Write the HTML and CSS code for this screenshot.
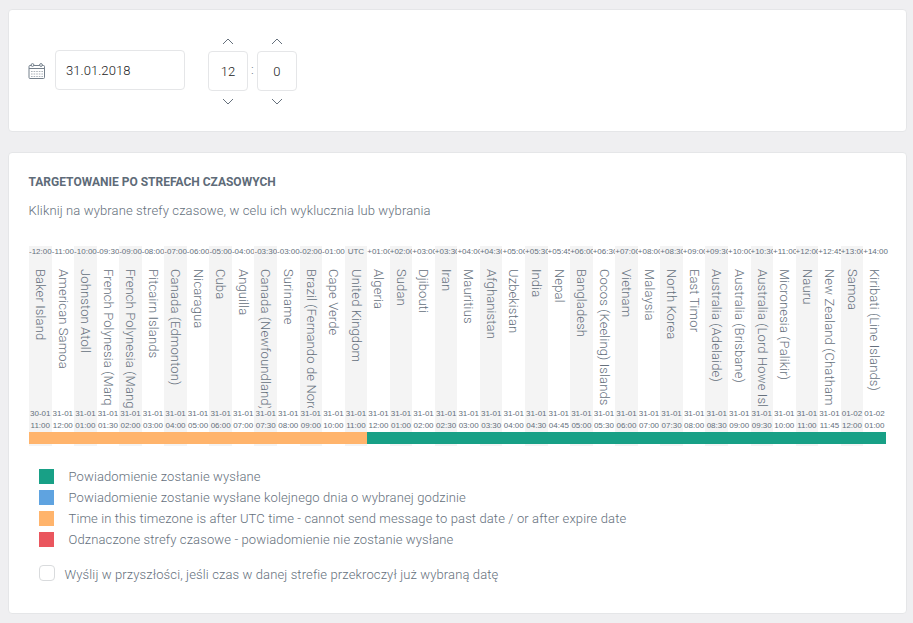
FILE: index.html
```html
<!DOCTYPE html>
<html lang="pl">
<head>
<meta charset="utf-8">
<title>Strefy czasowe</title>
<link rel="stylesheet" href="styles.css">
</head>
<body>
<section class="card schedule">
  <svg class="calendar" width="18" height="18" viewBox="0 0 18 18" fill="none" stroke="#75808c">
    <rect x="1" y="3.5" width="15.5" height="13" rx="1"/>
    <path d="M1 6.5h15.5"/>
    <circle cx="4.5" cy="3" r="1.4" fill="#fff"/>
    <circle cx="13" cy="3" r="1.4" fill="#fff"/>
    <path d="M3 9.5h12M3 12h12M3 14.5h12" stroke-dasharray="1.6 1" stroke-width="1.2" opacity=".6"/>
  </svg>
  <input class="date" type="text" value="31.01.2018">
  <div class="spinner">
    <svg width="12" height="7" viewBox="0 0 12 7"><path d="M1 6l5-5 5 5"/></svg>
    <input type="text" value="12">
    <svg width="12" height="7" viewBox="0 0 12 7"><path d="M1 1l5 5 5-5"/></svg>
  </div>
  <span class="colon">:</span>
  <div class="spinner">
    <svg width="12" height="7" viewBox="0 0 12 7"><path d="M1 6l5-5 5 5"/></svg>
    <input type="text" value="0">
    <svg width="12" height="7" viewBox="0 0 12 7"><path d="M1 1l5 5 5-5"/></svg>
  </div>
</section>
<section class="card targeting">
  <h2>TARGETOWANIE PO STREFACH CZASOWYCH</h2>
  <p class="intro">Kliknij na wybrane strefy czasowe, w celu ich wyklucznia lub wybrania</p>
  <div class="zones" id="zones"></div>
  <ul class="legend">
    <li><i class="send"></i>Powiadomienie zostanie wysłane</li>
    <li><i class="next"></i>Powiadomienie zostanie wysłane kolejnego dnia o wybranej godzinie</li>
    <li><i class="past"></i>Time in this timezone is after UTC time - cannot send message to past date / or after expire date</li>
    <li><i class="off"></i>Odznaczone strefy czasowe - powiadomienie nie zostanie wysłane</li>
  </ul>
  <label class="future"><input type="checkbox">Wyślij w przyszłości, jeśli czas w danej strefie przekroczył już wybraną datę</label>
</section>
<script src="script.js"></script>
</body>
</html>
```
FILE: styles.css
```css
* { box-sizing: border-box; }
body {
  margin: 0;
  padding: 9px 6px 9px 8px;
  background: #efeff1;
  color: #65707c;
  font: 300 13px/21px Roboto, sans-serif;
  letter-spacing: .122px;
}
.card {
  background: #fff;
  border: 1px solid #e5e6e8;
  border-radius: 4px;
}
.schedule {
  display: flex;
  align-items: center;
  height: 123px;
  padding: 0 0 0 19px;
}
.calendar { margin-right: 9px; }
input[type="text"] {
  border: 1px solid #e5e6e8;
  border-radius: 4px;
  height: 40px;
  background: #fff;
  color: #222;
  font: 300 13px Roboto, sans-serif;
  letter-spacing: .05px;
}
.date { width: 130px; padding: 1px 10px 0; margin: 0 23px 2px 0; }
.spinner {
  display: flex;
  flex-direction: column;
  align-items: center;
  gap: 7px;
}
.spinner input { width: 40px; padding: 1px 0 0; text-align: center; }
.spinner svg { fill: none; stroke: #65707c; }
.spinner svg:first-child { margin: 1px 0 -1px; }
.colon { width: 9px; text-align: center; margin-bottom: 3px; }
.targeting {
  height: 462px;
  margin-top: 20px;
  padding: 19px 20px 0 19.5px;
}
h2 { margin: 0; font: 700 12px/21px Roboto, sans-serif; color: #5e6b78; letter-spacing: 0; }
.intro { margin: 7px 0 25px; }
.zones { display: flex; width: 857px; height: 200px; margin-left: .5px; }
.zone {
  flex: 1 1 0;
  min-width: 0;
  overflow: hidden;
  font: 400 8px/12px "Liberation Sans", sans-serif;
  letter-spacing: 0;
  text-align: center;
  white-space: nowrap;
}
.zone:last-child { overflow: visible; }
.zone:nth-child(odd) { background: #f4f4f4; }
.name {
  height: 139px;
  margin: 11px 0 0;
  overflow: hidden;
  writing-mode: vertical-rl;
  text-align: left;
  font: 300 13px/22px Roboto, sans-serif;
  letter-spacing: .125px;
}
.bar { height: 12px; }
.send { background: #18a086; }
.next { background: #5fa3e0; }
.past { background: #ffb46c; }
.off { background: #ea565e; }
.legend { list-style: none; margin: 20px 0 0; padding: 0 0 0 10.5px; }
.legend li { display: flex; align-items: center; }
.legend i { width: 15px; height: 15px; margin-right: 14.5px; }
.future { display: flex; align-items: center; margin: 14px 0 0 10.5px; }
.future input {
  appearance: none;
  width: 16px;
  height: 16px;
  margin: 0 9.5px 3px 0;
  border: 1px solid #d9dbdd;
  border-radius: 4px;
}
```
FILE: script.js
```js
const zones = `-12:00|Baker Island|30-01|11:00
-11:00|American Samoa|31-01|12:00
-10:00|Johnston Atoll|31-01|01:00
-09:30|French Polynesia (Marq|31-01|01:30
-09:00|French Polynesia (Mang|31-01|02:00
-08:00|Pitcairn Islands|31-01|03:00
-07:00|Canada (Edmonton)|31-01|04:00
-06:00|Nicaragua|31-01|05:00
-05:00|Cuba|31-01|06:00
-04:00|Anguilla|31-01|07:00
-03:30|Canada (Newfoundland)|31-01|07:30
-03:00|Suriname|31-01|08:00
-02:00|Brazil (Fernando de Noronha)|31-01|09:00
-01:00|Cape Verde|31-01|10:00
UTC|United Kingdom|31-01|11:00
+01:00|Algeria|31-01|12:00
+02:00|Sudan|31-01|01:00
+03:00|Djibouti|31-01|02:00
+03:30|Iran|31-01|02:30
+04:00|Mauritius|31-01|03:00
+04:30|Afghanistan|31-01|03:30
+05:00|Uzbekistan|31-01|04:00
+05:30|India|31-01|04:30
+05:45|Nepal|31-01|04:45
+06:00|Bangladesh|31-01|05:00
+06:30|Cocos (Keeling) Islands|31-01|05:30
+07:00|Vietnam|31-01|06:00
+08:00|Malaysia|31-01|07:00
+08:30|North Korea|31-01|07:30
+09:00|East Timor|31-01|08:00
+09:30|Australia (Adelaide)|31-01|08:30
+10:00|Australia (Brisbane)|31-01|09:00
+10:30|Australia (Lord Howe Isl|31-01|09:30
+11:00|Micronesia (Palikir)|31-01|10:00
+12:00|Nauru|31-01|11:00
+12:45|New Zealand (Chatham|31-01|11:45
+13:00|Samoa|01-02|12:00
+14:00|Kiribati (Line Islands)|01-02|01:00`;
document.getElementById('zones').innerHTML = zones.split('\n').map((row, i) => {
  const [offset, name, date, time] = row.split('|');
  return `<div class="zone"><div>${offset}</div><div class="name">${name}</div><div>${date}</div><div>${time}</div><div class="bar ${i < 15 ? 'past' : 'send'}"></div></div>`;
}).join('');
```
